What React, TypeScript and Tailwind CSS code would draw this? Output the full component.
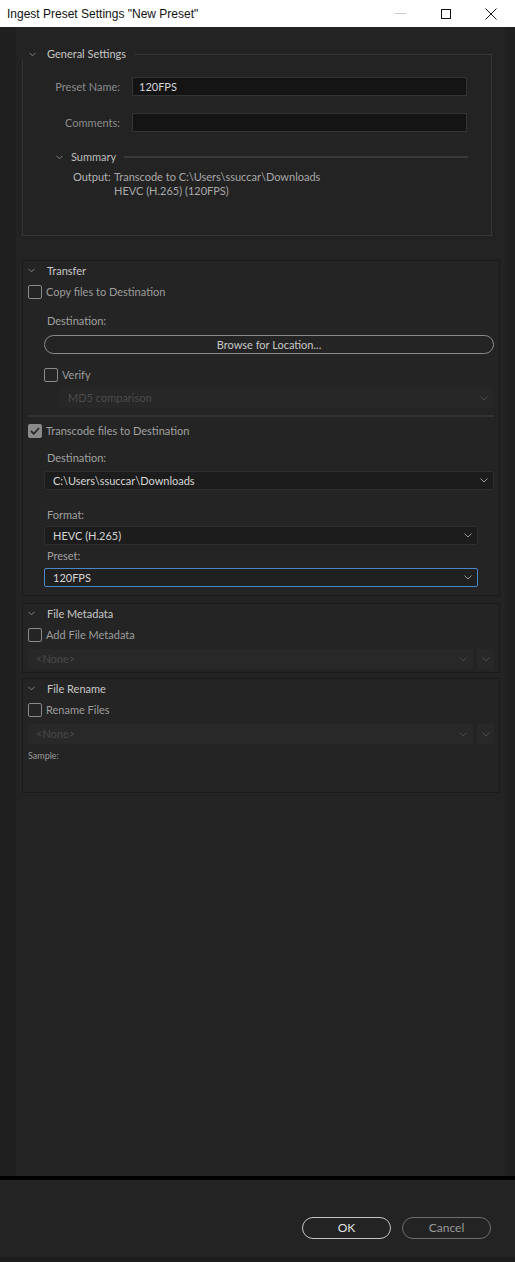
import React from "react";

const Chevron = ({ color = "#9a9a9a", w = 8 }: { color?: string; w?: number }) => (
  <svg width={w} height={5} viewBox="0 0 8 5" fill="none">
    <polyline points="0.5,0.5 4,4 7.5,0.5" stroke={color} strokeWidth="1" />
  </svg>
);

const Box = ({ checked = false, size = 14 }: { checked?: boolean; size?: number }) => (
  <div
    className={
      checked
        ? "flex shrink-0 items-center justify-center rounded-[2px] bg-[#8a8a8a]"
        : "shrink-0 rounded-[2px] border-[1.5px] border-[#8a8a8a]"
    }
    style={{ width: size, height: size }}
  >
    {checked && (
      <svg width="10" height="8" viewBox="0 0 10 8" fill="none">
        <polyline points="1,4 3.8,6.8 9,1" stroke="#2a2a2a" strokeWidth="1.8" />
      </svg>
    )}
  </div>
);

const SectionHeader = ({ title }: { title: string }) => (
  <div className="flex h-[19px] items-center">
    <div className="ml-[5px] flex w-[19px] items-center">
      <Chevron color="#8a8a8a" w={7} />
    </div>
    <span className="text-[#c6c6c6]">{title}</span>
  </div>
);

const Dropdown = ({
  text,
  className = "",
  blue = false,
}: {
  text: string;
  className?: string;
  blue?: boolean;
}) => (
  <div
    className={
      "flex h-[19px] items-center justify-between rounded-[2px] border pl-[8px] pr-[5px] text-[#d6d6d6] " +
      (blue ? "border-[#4b86c4] bg-[#202020] " : "border-[#2e2e2e] bg-[#1c1c1c] ") +
      className
    }
  >
    <span>{text}</span>
    <Chevron />
  </div>
);

export default function App() {
  return (
    <div
      className="flex h-[1262px] w-[515px] flex-col overflow-hidden bg-[#1f1f1f] text-[11px] leading-[14px]"
      style={{ fontFamily: "Lato, 'Liberation Sans', sans-serif" }}
    >
      {/* Title bar */}
      <div
        className="flex h-[27px] shrink-0 items-center bg-white text-[12px] text-[#111]"
        style={{ fontFamily: "'Liberation Sans', Arial, sans-serif" }}
      >
        <span className="pl-[7px]">Ingest Preset Settings "New Preset"</span>
        <div className="ml-auto flex h-full items-center">
          <div className="flex w-[46px] items-center justify-center">
            <div className="h-[1px] w-[11px] bg-[#c8c8c8]" />
          </div>
          <div className="flex w-[46px] items-center justify-center">
            <div className="h-[10px] w-[10px] border border-[#111]" />
          </div>
          <div className="flex w-[46px] items-center justify-center pr-[2px]">
            <svg width="12" height="12" viewBox="0 0 12 12">
              <path d="M0.5 0.5 L11.5 11.5 M11.5 0.5 L0.5 11.5" stroke="#111" strokeWidth="1" />
            </svg>
          </div>
        </div>
      </div>

      {/* Main area */}
      <div className="h-[1149px] shrink-0 pl-[16px] pr-[10px]">
        <div className="h-full bg-[#232323] pt-[21px]">
          {/* General settings */}
          <div className="ml-[6px] w-[470px]">
            <div className="flex h-[12px] items-start">
              <div className="flex h-[12px] w-[25px] items-center pl-[7px]">
                <Chevron color="#8a8a8a" w={7} />
              </div>
              <span className="-mt-[1px] pr-[8px] text-[#c6c6c6]">General Settings</span>
              <div className="mt-[6px] h-[6px] flex-1 border-r border-t border-[#363636]" />
            </div>
            <div className="h-[176px] border-b border-l border-r border-[#363636] pt-[17px]">
              <div className="flex items-center">
                <span className="w-[97px] text-right text-[#8c8c8c]">Preset Name:</span>
                <div className="ml-[12px] flex h-[19px] w-[335px] items-center border border-[#333] bg-[#141414] pl-[6px] text-[#d6d6d6]">
                  120FPS
                </div>
              </div>
              <div className="mt-[17px] flex items-center">
                <span className="w-[97px] text-right text-[#8c8c8c]">Comments:</span>
                <div className="ml-[12px] h-[19px] w-[335px] border border-[#333] bg-[#141414]" />
              </div>
              <div className="mt-[18px] flex h-[14px] items-center pr-[23px]">
                <div className="ml-[33px] flex w-[15px] items-center">
                  <Chevron color="#8a8a8a" w={7} />
                </div>
                <span className="pr-[8px] text-[#bdbdbd]">Summary</span>
                <div className="h-[2px] flex-1 bg-[#3a3a3a]" />
              </div>
              <div className="mt-[6px] flex pl-[50px]">
                <span className="w-[41px] text-[#b4b4b4]">Output:</span>
                <div className="text-[#a8a8a8]">
                  <div>Transcode to C:\Users\ssuccar\Downloads</div>
                  <div>HEVC (H.265) (120FPS)</div>
                </div>
              </div>
            </div>
          </div>

          {/* Transfer */}
          <div className="ml-[6px] mt-[24px] w-[478px] border border-[#1a1a1a] bg-[#242424] pb-[8px]">
            <SectionHeader title="Transfer" />
            <div className="ml-[5px] mt-[5px] flex h-[14px] items-center gap-[4px]">
              <Box />
              <span className="text-[#9c9c9c]">Copy files to Destination</span>
            </div>
            <div className="ml-[24px] mt-[15px] h-[14px] text-[#a0a0a0]">Destination:</div>
            <div className="ml-[21px] mr-[5px] mt-[7px] flex h-[19px] items-center justify-center rounded-full border border-[#8a8a8a] text-[#c8c8c8]">
              Browse for Location...
            </div>
            <div className="ml-[21px] mt-[14px] flex h-[14px] items-center gap-[4px]">
              <Box />
              <span className="text-[#9c9c9c]">Verify</span>
            </div>
            <div className="ml-[36px] mr-[5px] mt-[6px] flex h-[20px] items-center justify-between bg-[#272727] pl-[9px] pr-[6px] text-[#4c4c4c]">
              <span>MD5 comparison</span>
              <Chevron color="#4a4a4a" />
            </div>
            <div className="ml-[5px] mr-[5px] mt-[7px] h-[2px] bg-[#323232]" />
            <div className="ml-[5px] mt-[7px] flex h-[14px] items-center gap-[4px]">
              <Box checked />
              <span className="text-[#a0a0a0]">Transcode files to Destination</span>
            </div>
            <div className="ml-[24px] mt-[13px] h-[14px] text-[#a0a0a0]">Destination:</div>
            <Dropdown text="C:\Users\ssuccar\Downloads" className="ml-[21px] mr-[5px] mt-[6px]" />
            <div className="ml-[24px] mt-[18px] h-[14px] text-[#a0a0a0]">Format:</div>
            <Dropdown text="HEVC (H.265)" className="ml-[21px] mr-[21px] mt-[4px]" />
            <div className="ml-[24px] mt-[4px] h-[14px] text-[#a0a0a0]">Preset:</div>
            <Dropdown text="120FPS" blue className="ml-[21px] mr-[21px] mt-[5px]" />
          </div>

          {/* File Metadata */}
          <div className="ml-[6px] mt-[7px] w-[478px] border border-[#1a1a1a] bg-[#242424] pb-[3px]">
            <SectionHeader title="File Metadata" />
            <div className="ml-[5px] mt-[5px] flex h-[14px] items-center gap-[4px]">
              <Box />
              <span className="text-[#9c9c9c]">Add File Metadata</span>
            </div>
            <div className="ml-[5px] mr-[5px] mt-[7px] flex h-[20px] items-center gap-[4px]">
              <div className="flex h-full flex-1 items-center justify-between bg-[#282828] pl-[8px] pr-[6px] text-[#4a4a4a]">
                <span>&lt;None&gt;</span>
                <Chevron color="#4a4a4a" />
              </div>
              <div className="flex h-full w-[17px] items-center justify-center bg-[#282828]">
                <Chevron color="#4a4a4a" />
              </div>
            </div>
          </div>

          {/* File Rename */}
          <div className="ml-[6px] mt-[5px] w-[478px] border border-[#1a1a1a] bg-[#242424] pb-[30px]">
            <SectionHeader title="File Rename" />
            <div className="ml-[5px] mt-[5px] flex h-[14px] items-center gap-[4px]">
              <Box />
              <span className="text-[#9c9c9c]">Rename Files</span>
            </div>
            <div className="ml-[5px] mr-[5px] mt-[7px] flex h-[20px] items-center gap-[4px]">
              <div className="flex h-full flex-1 items-center justify-between bg-[#282828] pl-[8px] pr-[6px] text-[#4a4a4a]">
                <span>&lt;None&gt;</span>
                <Chevron color="#4a4a4a" />
              </div>
              <div className="flex h-full w-[17px] items-center justify-center bg-[#282828]">
                <Chevron color="#4a4a4a" />
              </div>
            </div>
            <div className="ml-[5px] mt-[6px] h-[12px] text-[9px] leading-[12px] text-[#9a9a9a]">Sample:</div>
          </div>
        </div>
      </div>

      {/* Separator */}
      <div className="h-[4px] shrink-0 bg-black" />

      {/* Footer */}
      <div className="flex h-[77px] shrink-0 items-start justify-end gap-[11px] bg-[#232323] pr-[24px] pt-[37px]">
        <div className="flex h-[22px] w-[89px] items-center justify-center rounded-full border border-[#c4c4c4] text-[12px] text-[#e2e2e2]">
          OK
        </div>
        <div className="flex h-[22px] w-[89px] items-center justify-center rounded-full border border-[#6e6e6e] text-[12px] text-[#9a9a9a]">
          Cancel
        </div>
      </div>
      <div className="h-[5px] shrink-0 bg-[#1c1c1c]" />
    </div>
  );
}
